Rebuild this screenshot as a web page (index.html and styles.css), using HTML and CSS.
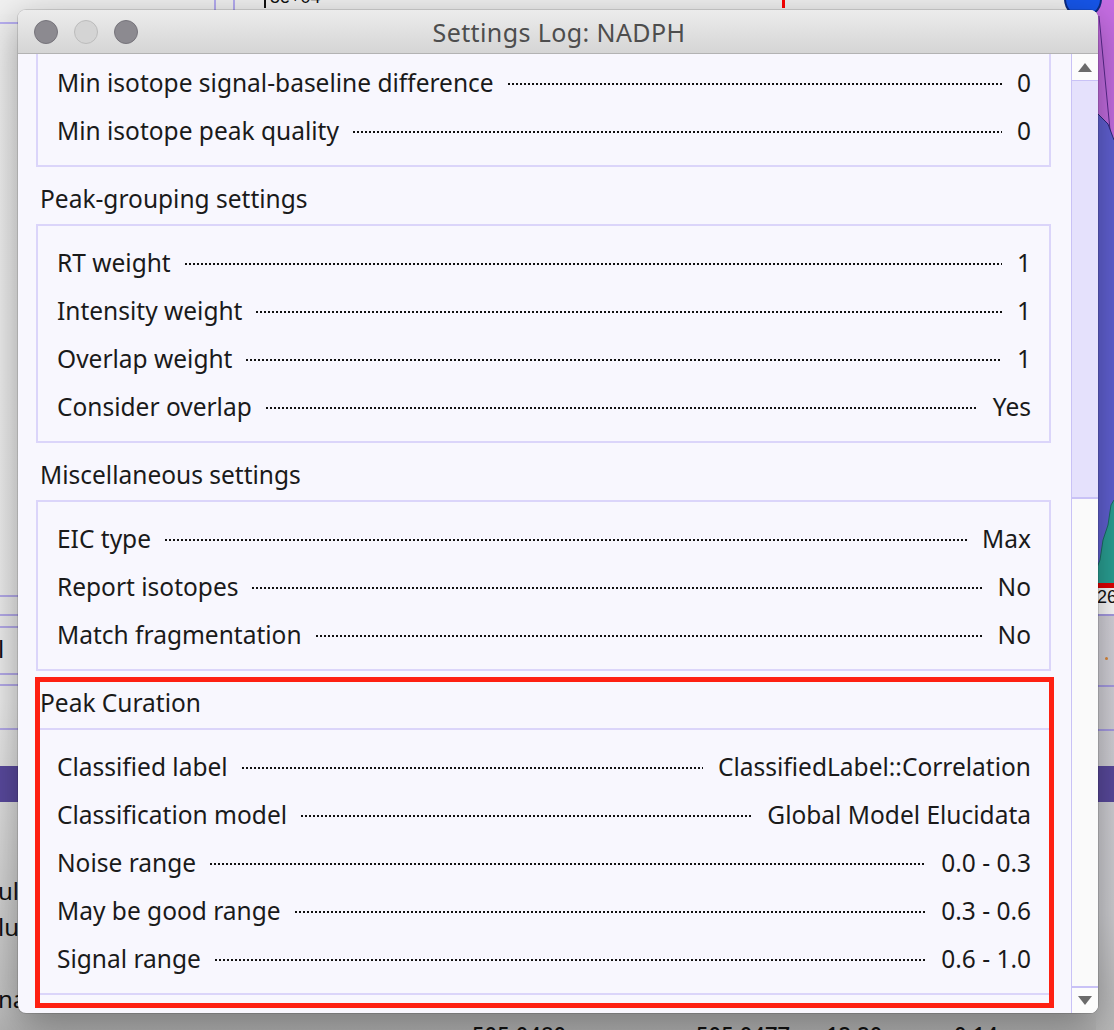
FILE: index.html
```html
<!DOCTYPE html>
<html>
<head>
<meta charset="utf-8">
<link rel="stylesheet" href="styles.css">
</head>
<body>
<div class="desktop">
  <div class="app">
    <div class="app-top">
      <span class="vline vline-a"></span>
      <span class="vline vline-b"></span>
      <span class="axis-label">5e+04</span>
      <span class="red-tick"></span>
    </div>
    <div class="left-line left-line-top"></div>
    <div class="right-plot">
      <svg class="plot-svg" width="18" height="614" viewBox="0 0 18 614">
        <rect x="0" y="0" width="18" height="614" fill="#ffffff"/>
        <polygon points="0,0 18,0 18,140 12,124 6,118 0,112" fill="#c66ee4"/>
        <polyline points="3,16 14,130 18,150" fill="none" stroke="#5a2a90" stroke-width="1"/>
        <polygon points="0,112 6,118 12,124 18,140 18,585 0,585" fill="#6262d6"/>
        <polyline points="0,112 6,118 12,124 18,140" fill="none" stroke="#2a2878" stroke-width="1"/>
        <polygon points="18,500 18,585 0,585 0,570 4,560 7,540 12,525 15,505" fill="#2aa396"/>
        <polyline points="0,570 4,560 7,540 12,525 15,505 18,500" fill="none" stroke="#1b6e66" stroke-width="1"/>
        <rect x="0" y="583" width="18" height="5" fill="#e50000"/>
      </svg>
      <div class="plot-num">26</div>
    </div>
    <span class="blue-dot"></span>
    <div class="right-panel"></div>
    <div class="left-panel">
      <span class="lp-line" style="top:595px"></span>
      <span class="lp-line" style="top:614px"></span>
      <span class="lp-line" style="top:626px"></span>
      <span class="lp-text" style="top:634px">l</span>
      <span class="lp-line" style="top:673px"></span>
      <span class="lp-line" style="top:684px"></span>
      <span class="lp-line" style="top:728px"></span>
      <span class="lp-text" style="top:876px">ul</span>
      <span class="lp-text" style="top:912px">lu</span>
      <span class="lp-text" style="top:984px">na</span>
    </div>
    <div class="rp-lines">
      <span class="rp-line" style="top:614px"></span>
      <span class="rp-line" style="top:685px"></span>
      <span class="rp-line" style="top:729px"></span>
      <span class="rp-dot"></span>
    </div>
    <div class="purple-band"></div>
    <div class="bottom-nums">
      <span class="bn" style="left:472px">505.0480</span>
      <span class="bn" style="left:696px">505.0477</span>
      <span class="bn" style="left:826px">12.20</span>
      <span class="bn" style="left:954px">0.14</span>
    </div>
  </div>

  <div class="window">
    <div class="titlebar">
      <div class="lights">
        <span class="light dark"></span>
        <span class="light pale"></span>
        <span class="light dark"></span>
      </div>
      <div class="title">Settings Log: NADPH</div>
    </div>
    <div class="body">
      <div class="content">
        <div class="box box-first">
          <div class="row"><span class="label">Min isotope signal-baseline difference</span><span class="leader"></span><span class="value">0</span></div>
          <div class="row"><span class="label">Min isotope peak quality</span><span class="leader"></span><span class="value">0</span></div>
        </div>
        <div class="heading">Peak-grouping settings</div>
        <div class="box">
          <div class="row"><span class="label">RT weight</span><span class="leader"></span><span class="value">1</span></div>
          <div class="row"><span class="label">Intensity weight</span><span class="leader"></span><span class="value">1</span></div>
          <div class="row"><span class="label">Overlap weight</span><span class="leader"></span><span class="value">1</span></div>
          <div class="row"><span class="label">Consider overlap</span><span class="leader"></span><span class="value">Yes</span></div>
        </div>
        <div class="heading">Miscellaneous settings</div>
        <div class="box">
          <div class="row"><span class="label">EIC type</span><span class="leader"></span><span class="value">Max</span></div>
          <div class="row"><span class="label">Report isotopes</span><span class="leader"></span><span class="value">No</span></div>
          <div class="row"><span class="label">Match fragmentation</span><span class="leader"></span><span class="value">No</span></div>
        </div>
        <div class="heading">Peak Curation</div>
        <div class="box">
          <div class="row"><span class="label">Classified label</span><span class="leader"></span><span class="value">ClassifiedLabel::Correlation</span></div>
          <div class="row"><span class="label">Classification model</span><span class="leader"></span><span class="value">Global Model Elucidata</span></div>
          <div class="row"><span class="label">Noise range</span><span class="leader"></span><span class="value">0.0 - 0.3</span></div>
          <div class="row"><span class="label">May be good range</span><span class="leader"></span><span class="value">0.3 - 0.6</span></div>
          <div class="row"><span class="label">Signal range</span><span class="leader"></span><span class="value">0.6 - 1.0</span></div>
        </div>
      </div>
      <div class="scrollbar">
        <div class="sb-btn sb-up">
          <svg width="14" height="9" viewBox="0 0 14 9"><polygon points="7,0 14,9 0,9" fill="#6b6b6b"/></svg>
        </div>
        <div class="sb-thumb"></div>
        <div class="sb-track"></div>
        <div class="sb-btn sb-down">
          <svg width="14" height="9" viewBox="0 0 14 9"><polygon points="0,0 14,0 7,9" fill="#6b6b6b"/></svg>
        </div>
      </div>
    </div>
    <div class="highlight"></div>
  </div>
</div>
</body>
</html>
```

FILE: styles.css
```css
* { box-sizing: border-box; }
html, body { margin: 0; padding: 0; }
body {
  width: 1114px;
  height: 1030px;
  overflow: hidden;
  font-family: "Noto Sans", "DejaVu Sans", sans-serif;
  background: #ededed;
}
.desktop {
  position: relative;
  width: 1114px;
  height: 1030px;
  overflow: hidden;
  background: linear-gradient(to bottom, #f0f0f0 0px, #eeeeee 700px, #c4c4c4 1000px, #b2b2b2 1030px);
}

/* ---------- background application ---------- */
.app { position: absolute; inset: 0; }
.app-top {
  position: absolute;
  left: 0; top: 0;
  width: 1114px; height: 14px;
  background: #f1f1f1;
}
.vline { position: absolute; top: 0; width: 2px; height: 14px; background: #b5acf0; }
.vline-a { left: 214px; }
.vline-b { left: 233px; }
.axis-label {
  position: absolute;
  left: 264px; top: -14px;
  padding-left: 4px;
  border-left: 2px solid #111;
  font-family: "Liberation Sans", sans-serif;
  font-size: 18px;
  line-height: 22px;
  color: #111;
}
.red-tick { position: absolute; left: 782px; top: 0; width: 3px; height: 8px; background: #f00; }
.blue-dot {
  position: absolute;
  left: 1064px; top: -20px;
  width: 38px; height: 38px;
  border-radius: 50%;
  background: #1656ea;
  border: 2px solid #0a2a80;
}
.left-line { position: absolute; left: 0; width: 20px; height: 2px; background: #b9b0f2; }
.left-line-top { top: 22px; }

.right-plot {
  position: absolute;
  left: 1096px; top: 0;
  width: 18px; height: 614px;
  background: #ffffff;
  overflow: hidden;
}
.plot-svg { display: block; position: absolute; left: 0; top: 0; }
.plot-num {
  position: absolute; left: 1px; top: 586px;
  font-family: "Liberation Sans", sans-serif;
  font-size: 18px; line-height: 22px; color: #111;
}
.right-panel {
  position: absolute; left: 1096px; top: 614px; width: 18px; height: 416px;
  background: linear-gradient(to bottom, #d8d6de, #d0d0d4 300px, #b9b9b9);
}
.rp-lines { position: absolute; left: 1096px; top: 0; width: 18px; height: 1030px; }
.rp-line { position: absolute; left: 0; width: 18px; height: 2px; background: #a99ee6; }
.rp-dot { position: absolute; left: 9px; top: 657px; width: 3px; height: 3px; border-radius: 50%; background: #e08a3a; }

.left-panel { position: absolute; left: 0; top: 0; width: 20px; height: 1030px; }
.lp-line { position: absolute; left: 0; width: 20px; height: 2px; background: #b6aceb; }
.lp-text {
  position: absolute; left: -2px;
  font-family: "Noto Sans", sans-serif;
  font-size: 24px; line-height: 30px; color: #111;
}
.purple-band {
  position: absolute; left: 0; top: 766px; width: 1114px; height: 36px;
  background: #5a4a9f;
}
.bottom-nums { position: absolute; left: 0; top: 1014px; width: 1114px; height: 16px; overflow: hidden; }
.bn {
  position: absolute; top: 7px;
  font-family: "Noto Sans", sans-serif;
  font-size: 22px; line-height: 26px; color: #111; font-weight: 500;
}

/* ---------- window ---------- */
.window {
  position: absolute;
  left: 18px; top: 10px;
  width: 1080px; height: 1003px;
  border-radius: 8px;
  background: #f8f7fe;
  box-shadow: 0 0 0 1px rgba(0,0,0,0.12), 0 12px 40px rgba(0,0,0,0.38);
  display: flex;
  flex-direction: column;
  overflow: hidden;
}
.titlebar {
  position: relative;
  flex: 0 0 44px;
  background: linear-gradient(to bottom, #ececec, #d5d5d5);
  border-bottom: 1px solid #b3b3b3;
  display: flex;
  align-items: center;
}
.lights { display: flex; gap: 16px; padding-left: 16px; padding-top: 1px; }
.light { width: 24px; height: 24px; border-radius: 50%; }
.light.dark { background: #8c8a90; border: 1px solid #76747b; }
.light.pale { background: #d4d4d4; border: 1px solid #bcbcbc; }
.title {
  position: absolute;
  left: 0; right: 0; top: 0; bottom: 0;
  display: flex; align-items: center; justify-content: center;
  font-family: "Noto Sans", sans-serif;
  font-size: 25px;
  letter-spacing: 0.4px;
  color: #4d4d4d;
  padding-left: 2px;
}
.body { flex: 1; display: flex; min-height: 0; }
.content {
  flex: 1;
  overflow: hidden;
  padding: 0 20px 0 18px;
  color: #1a1a1a;
  font-size: 24.5px;
}
.box {
  border: 2px solid #dbd5fa;
  padding: 13px 18px 10px 19px;
}
.box-first { margin-top: -10px; }
.heading {
  line-height: 48px;
  height: 57px;
  padding: 8px 0 1px 4px;
}
.row {
  display: flex;
  align-items: center;
  height: 48px;
  line-height: 48px;
  white-space: nowrap;
}
.leader {
  flex: 1;
  height: 2px;
  margin: 2px 15px 0 14px;
  background-image: linear-gradient(to right, #111 50%, transparent 50%);
  background-size: 4px 2px;
  background-repeat: repeat-x;
}
.scrollbar {
  flex: 0 0 27px;
  display: flex;
  flex-direction: column;
  border-left: 1px solid #c9c2f6;
  background: #fafafa;
}
.sb-btn {
  flex: 0 0 27px;
  display: flex; align-items: center; justify-content: center;
  background: #fcfcfc;
}
.sb-up { border-bottom: 1px solid #c9c2f6; }
.sb-down { border-top: 2px solid #c9c2f6; }
.sb-thumb {
  flex: 0 0 418px;
  background: #e5e1fc;
  border-bottom: 2px solid #c9c2f6;
}
.sb-track { flex: 1; background: #fafafa; }

.highlight {
  position: absolute;
  left: 17px; top: 667px;
  width: 1019px; height: 331px;
  border: 5px solid #fe2012;
  pointer-events: none;
}
```
